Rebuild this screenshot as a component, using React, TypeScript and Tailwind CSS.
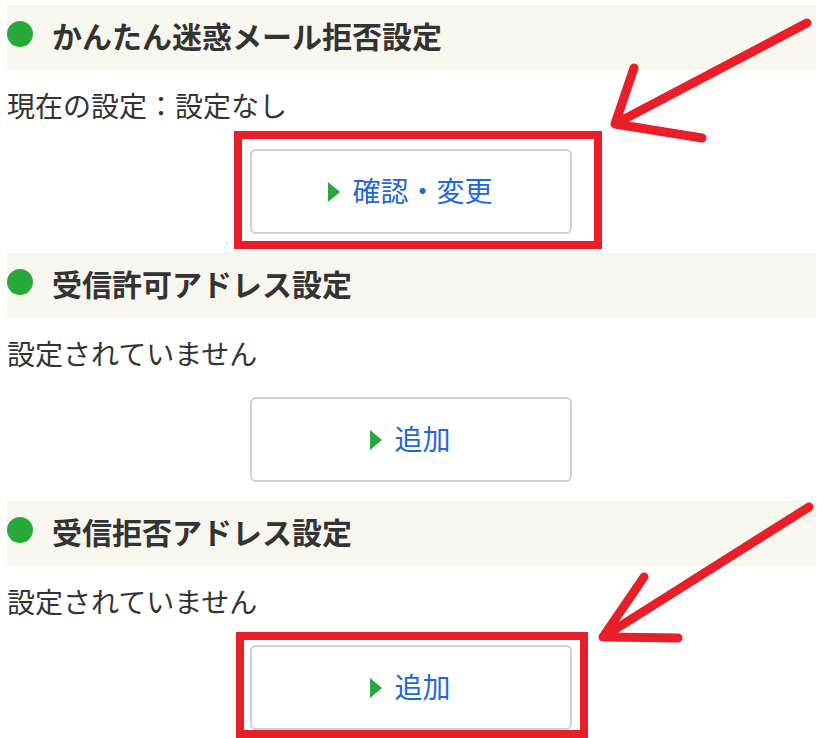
const jp = { fontFamily: '"Noto Sans CJK JP", "Noto Sans", sans-serif' };

type Section = {
  title: string;
  status: string;
  action: string;
};

const sections: Section[] = [
  { title: 'かんたん迷惑メール拒否設定', status: '現在の設定：設定なし', action: '確認・変更' },
  { title: '受信許可アドレス設定', status: '設定されていません', action: '追加' },
  { title: '受信拒否アドレス設定', status: '設定されていません', action: '追加' },
];

function SettingBlock({ section }: { section: Section }) {
  return (
    <section className="mb-[19px]">
      {/* Heading band */}
      <div className="flex h-[65px] items-center bg-[#f8f7ef]">
        <span className="mb-[7px] h-[26px] w-[26px] flex-shrink-0 rounded-full bg-[#27a83a]" />
        <h2 className="mb-[6px] ml-[19px] text-[30px] font-bold leading-none text-[#333333]">{section.title}</h2>
      </div>

      <p className="pt-[18px] text-[28px] leading-[34px] text-[#333333]">{section.status}</p>

      <div className="mt-[27px] flex justify-center pr-[2px]">
        <button className="flex h-[85px] w-[322px] items-center justify-center gap-[12px] rounded-[6px] border-2 border-[#d0d0d0] bg-white">
          <svg width="12" height="20" viewBox="0 0 12 20">
            <path d="M0 0 L12 10 L0 20 Z" fill="#2aa63c" />
          </svg>
          <span className="mb-[4px] text-[28px] leading-none text-[#1f68d8]">{section.action}</span>
        </button>
      </div>
    </section>
  );
}

export default function App() {
  return (
    <div className="relative h-[738px] w-[825px] overflow-hidden bg-white pt-[5px]" style={jp}>
      <div className="ml-[7px] w-[809px]">
        {sections.map((s) => (
          <SettingBlock key={s.title} section={s} />
        ))}
      </div>

      {/* Red annotation marks */}
      <svg className="pointer-events-none absolute inset-0" width="825" height="738" viewBox="0 0 825 738">
        <g fill="none" stroke="#e81e29" strokeLinecap="round" strokeLinejoin="round">
          <rect x="238" y="135" width="360" height="110" strokeWidth="8" strokeLinecap="butt" strokeLinejoin="miter" />
          <rect x="240" y="636" width="344" height="98" strokeWidth="8" strokeLinecap="butt" strokeLinejoin="miter" />
          <path d="M807 23 L615 124 M634 68 L615 124 L702 138" strokeWidth="9" />
          <path d="M809 507 L603 637 M644 577 L603 637 L678 638" strokeWidth="9" />
        </g>
      </svg>
    </div>
  );
}
